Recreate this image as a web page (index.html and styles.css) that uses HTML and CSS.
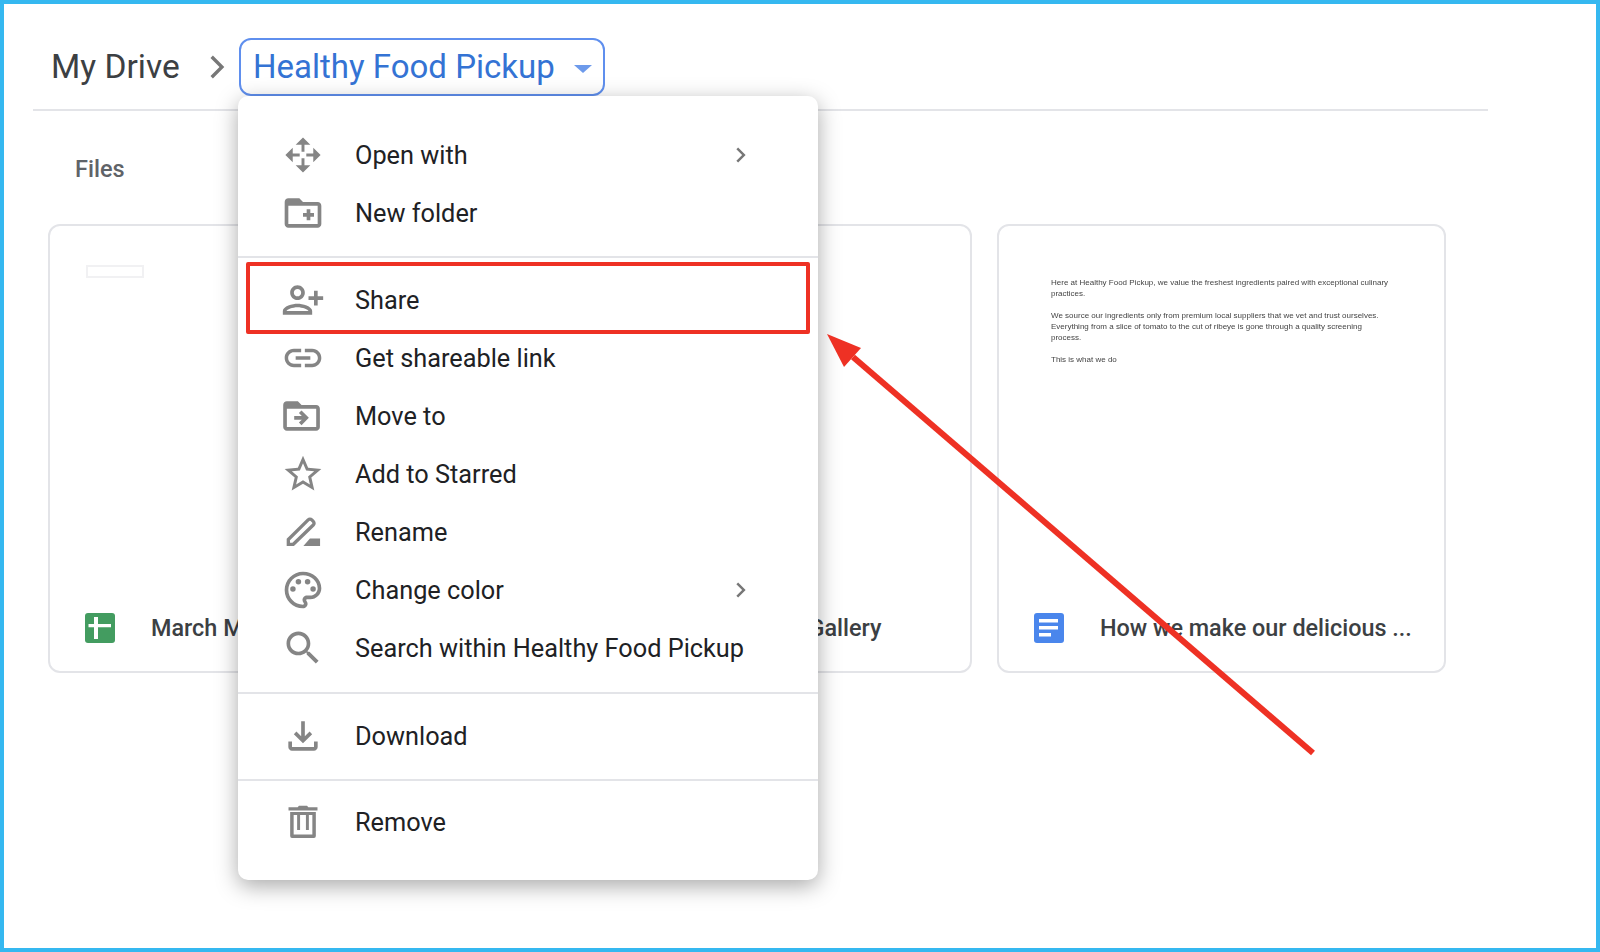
FILE: index.html
```html
<!DOCTYPE html>
<html lang="en">
  <head>
    <title>My Drive - Healthy Food Pickup</title>
    <link rel="stylesheet" href="styles.css">
  </head>
  <body>
    <div class="frame">
      <header class="breadcrumb">
        <span class="crumb">My Drive</span>
        <svg class="crumb-sep" viewBox="0 0 24 24"><path d="M8.6 4.4L7 6l6 6-6 6 1.6 1.6L16.2 12z"/></svg>
        <div class="crumb-wrap">
          <button class="crumb-current">
            <span>Healthy Food Pickup</span>
            <i class="caret"></i>
          </button>

          <div class="menu">
            <div class="menu-group menu-group-top">
              <div class="menu-item">
                <svg class="icon" viewBox="0 0 24 24"><path d="M12 2.400L8 6.400h3.200v3.800h1.600V6.400H16zM12 21.600l4-4h-3.200v-3.800h-1.600v3.800H8zM2.400 12l4 4v-3.200h3.800v-1.600H6.400V8zM21.600 12l-4-4v3.200h-3.800v1.600h3.800V16z"/></svg>
                <span class="menu-label">Open with</span>
                <svg class="sub-arrow" viewBox="0 0 24 24"><path d="M9.7 6L8.3 7.4l4.6 4.6-4.6 4.6L9.7 18l6-6z"/></svg>
              </div>
              <div class="menu-item">
                <svg class="icon" viewBox="0 0 24 24"><path d="M20 6h-8l-2-2H4c-1.11 0-1.99.89-1.99 2L2 18c0 1.11.89 2 2 2h16c1.11 0 2-.89 2-2V8c0-1.11-.89-2-2-2zm0 12H4V8h16v10zm-8-4h2v2h2v-2h2v-2h-2v-2h-2v2h-2z"/></svg>
                <span class="menu-label">New folder</span>
              </div>
            </div>

            <div class="menu-group menu-group-main">
              <div class="menu-item menu-item-marked">
                <svg class="icon" viewBox="0 0 24 24"><path transform="translate(24 0) scale(-1 1)" d="M15 12c2.21 0 4-1.79 4-4s-1.79-4-4-4-4 1.79-4 4 1.79 4 4 4zm0-6c1.1 0 2 .9 2 2s-.9 2-2 2-2-.9-2-2 .9-2 2-2zm0 8c-2.67 0-8 1.34-8 4v2h16v-2c0-2.66-5.33-4-8-4zm-6 4c.22-.72 3.31-2 6-2 2.7 0 5.8 1.29 6 2H9zm-3-3v-3h3v-2H6V7H4v3H1v2h3v3h2z"/></svg>
                <span class="menu-label">Share</span>
              </div>
              <div class="menu-item">
                <svg class="icon" viewBox="0 0 24 24"><path d="M3.9 12c0-1.71 1.39-3.1 3.1-3.1h4V7H7c-2.76 0-5 2.24-5 5s2.24 5 5 5h4v-1.9H7c-1.71 0-3.1-1.39-3.1-3.1zM8 13h8v-2H8v2zm9-6h-4v1.9h4c1.71 0 3.1 1.39 3.1 3.1s-1.39 3.1-3.1 3.1h-4V17h4c2.76 0 5-2.24 5-5s-2.24-5-5-5z"/></svg>
                <span class="menu-label">Get shareable link</span>
              </div>
              <div class="menu-item">
                <svg class="icon" viewBox="0 0 24 24"><path transform="translate(-.8 0)" d="M20 6h-8l-2-2H4c-1.1 0-2 .9-2 2v12c0 1.1.9 2 2 2h16c1.1 0 2-.9 2-2V8c0-1.1-.9-2-2-2zm0 12H4V8h16v10zm-8.010-9l-1.410 1.410L12.160 12H8v2h4.160l-1.590 1.590L11.990 17 16 13.010 11.990 9z"/></svg>
                <span class="menu-label">Move to</span>
              </div>
              <div class="menu-item">
                <svg class="icon" viewBox="0 0 24 24"><path d="M22 9.24l-7.19-.62L12 2 9.19 8.63 2 9.24l5.46 4.73L5.82 21 12 17.27 18.18 21l-1.63-7.03L22 9.24zM12 15.4l-3.76 2.27 1-4.28-3.32-2.88 4.38-.38L12 6.1l1.71 4.04 4.38.38-3.32 2.88 1 4.28L12 15.4z"/></svg>
                <span class="menu-label">Add to Starred</span>
              </div>
              <div class="menu-item">
                <svg class="icon" viewBox="0 0 24 24"><path class="icon-line" d="M4 18.700v-2.600L14.800 5.400c.6-.6 1.400-.6 2 0l.8.8c.6.6.6 1.400 0 2L6.700 18.700z"/><path d="M12.200 19.600l3.600-4h5.500v4z"/></svg>
                <span class="menu-label">Rename</span>
              </div>
              <div class="menu-item">
                <svg class="icon" viewBox="0 0 24 24"><path d="M12 22C6.49 22 2 17.51 2 12S6.49 2 12 2s10 4.04 10 9c0 3.31-2.69 6-6 6h-1.77c-.28 0-.5.22-.5.5 0 .12.05.23.13.33.41.47.64 1.06.64 1.67 0 1.38-1.12 2.5-2.5 2.5zm0-18c-4.41 0-8 3.59-8 8s3.59 8 8 8c.28 0 .5-.22.5-.5 0-.16-.08-.28-.14-.35-.41-.46-.63-1.05-.63-1.65 0-1.38 1.12-2.5 2.5-2.5H16c2.21 0 4-1.79 4-4 0-3.86-3.59-7-8-7z"/><circle cx="6.5" cy="11.5" r="1.5"/><circle cx="9.5" cy="7.5" r="1.5"/><circle cx="14.5" cy="7.5" r="1.5"/><circle cx="17.5" cy="11.5" r="1.5"/></svg>
                <span class="menu-label">Change color</span>
                <svg class="sub-arrow" viewBox="0 0 24 24"><path d="M9.7 6L8.3 7.4l4.6 4.6-4.6 4.6L9.7 18l6-6z"/></svg>
              </div>
              <div class="menu-item">
                <svg class="icon" viewBox="0 0 24 24"><path d="M15.5 14h-.79l-.28-.27C15.41 12.59 16 11.11 16 9.5 16 5.91 13.09 3 9.5 3S3 5.91 3 9.5 5.91 16 9.5 16c1.61 0 3.09-.59 4.23-1.57l.27.28v.79l5 4.99L20.49 19l-4.99-5zm-6 0C7.01 14 5 11.99 5 9.5S7.01 5 9.5 5 14 7.01 14 9.5 11.99 14 9.5 14z"/></svg>
                <span class="menu-label">Search within Healthy Food Pickup</span>
              </div>
            </div>

            <div class="menu-group menu-group-single">
              <div class="menu-item">
                <svg class="icon" viewBox="0 0 24 24"><path d="M18 15v3H6v-3H4v3c0 1.1.9 2 2 2h12c1.1 0 2-.9 2-2v-3h-2zm-1-4l-1.41-1.41L13 12.17V4h-2v8.17L8.41 9.59 7 11l5 5 5-5z"/></svg>
                <span class="menu-label">Download</span>
              </div>
            </div>

            <div class="menu-group">
              <div class="menu-item">
                <svg class="icon" viewBox="0 0 24 24"><path fill-rule="evenodd" d="M4.100 3.900h5l.7-.7h4.400l.7.7h5v1.800H4.100zM5 6.500h14v13.200a1 1 0 0 1-1 1H6a1 1 0 0 1-1-1zM6.900 8.200v10.600h10.200V8.200z"/><path d="M8.800 8.200h1.600v8.200H8.800zM13.600 8.200h1.600v8.200h-1.600z"/></svg>
                <span class="menu-label">Remove</span>
              </div>
            </div>
          </div>
        </div>
      </header>

      <main class="content">
        <h2 class="section-title">Files</h2>
        <div class="file-grid">
          <div class="file-card">
            <div class="thumb"><div class="sheet-cell"></div></div>
            <div class="file-name">
              <svg class="file-icon" viewBox="0 0 30 30"><rect width="30" height="30" rx="3" fill="#439c60"/><path d="M3.500 11H9V4h4v7h13v3.300H13V26H9V14.300H3.500z" fill="#fff"/></svg>
              <span>March M</span>
            </div>
          </div>
          <div class="file-card">
            <div class="thumb"></div>
            <div class="file-name file-name-end">
              <span>Gallery</span>
            </div>
          </div>
          <div class="file-card">
            <div class="thumb doc-thumb">
              <p>Here at Healthy Food Pickup, we value the freshest ingredients paired with exceptional culinary practices.</p>
              <p>We source our ingredients only from premium local suppliers that we vet and trust ourselves. Everything from a slice of tomato to the cut of ribeye is gone through a quality screening process.</p>
              <p>This is what we do</p>
            </div>
            <div class="file-name">
              <svg class="file-icon" viewBox="0 0 30 30"><rect width="30" height="30" rx="3" fill="#4a86ec"/><path d="M5 6h19v3.500H5zM5 13h19v3.500H5zM5 20h12v3.500H5z" fill="#fff"/></svg>
              <span>How we make our delicious ...</span>
            </div>
          </div>
        </div>
      </main>

      <!-- annotation pointing at the Share row -->
      <svg class="arrow" viewBox="0 0 1600 952">
        <path d="M1313 753L853 357" stroke="#ee3124" stroke-width="6" fill="none"/>
        <path d="M827 334L861 348L844 367z" fill="#ee3124"/>
      </svg>
    </div>
  </body>
</html>
```

FILE: styles.css
```css
* {
  box-sizing: border-box;
}
body {
  margin: 0;
  font-family: Roboto, "Liberation Sans", sans-serif;
  background-color: #fff;
}
.frame {
  width: 1600px;
  height: 952px;
  border: 4px solid #35b8f0;
  position: relative;
  overflow: hidden;
}

/* breadcrumb */
.breadcrumb {
  display: flex;
  align-items: center;
  width: 1455px;
  height: 107px;
  margin-left: 29px;
  padding: 34px 0 13px 18px;
  border-bottom: 2px solid #e3e4e8;
}
.crumb {
  font-size: 33.500px;
  color: #3c4043;
  width: 149px;
  padding-bottom: 2px;
}
.crumb-sep {
  width: 36px;
  height: 36px;
  fill: #777;
  margin-right: 3px;
}
.crumb-wrap {
  position: relative;
}
.crumb-current {
  display: flex;
  align-items: center;
  width: 366px;
  height: 58px;
  padding: 0 0 2px 12px;
  background-color: #fff;
  border: 2px solid #5f8fee;
  border-radius: 12px;
  font-family: inherit;
  font-size: 33px;
  color: #3473d4;
}
.caret {
  margin-left: 19px;
  margin-top: 5px;
  border-left: 9px solid transparent;
  border-right: 9px solid transparent;
  border-top: 8px solid #6d9aeb;
}

/* context menu */
.menu {
  position: absolute;
  top: 100%;
  left: -1px;
  z-index: 2;
  width: 580px;
  height: 784px;
  background-color: #fff;
  border-radius: 10px;
  box-shadow: 0 6px 22px rgba(0, 0, 0, 0.34);
  padding-top: 30px;
}
.menu-group {
  border-bottom: 2px solid #e3e4e8;
  padding: 0 0 14px;
  margin-bottom: 13px;
}
.menu-group-main {
  padding-bottom: 15px;
}
.menu-group-single {
  margin-bottom: 12px;
}
.menu-group:last-child {
  border-bottom: none;
}
.menu-item {
  display: flex;
  align-items: center;
  height: 58px;
  padding-left: 43px;
  position: relative;
}
.menu-item-marked::after {
  content: "";
  position: absolute;
  top: -9px;
  bottom: -5px;
  left: 8px;
  right: 8px;
  border: 4px solid #ee3124;
  border-radius: 2px;
}
.icon {
  width: 44px;
  height: 44px;
  fill: #858585;
  flex-shrink: 0;
}
.icon-line {
  fill: none;
  stroke: #858585;
  stroke-width: 1.800;
}
.menu-label {
  margin-left: 30px;
  font-size: 25.300px;
  color: #202124;
  white-space: nowrap;
}
.sub-arrow {
  position: absolute;
  left: 488px;
  width: 30px;
  height: 30px;
  fill: #777;
}

/* files */
.content {
  padding: 0 0 0 44px;
}
.section-title {
  margin: 43px 0 0 27px;
  font-size: 23.500px;
  line-height: 30px;
  font-weight: 500;
  color: #5f6368;
}
.file-grid {
  display: grid;
  grid-template-columns: repeat(3, 449px);
  gap: 25.500px;
  margin-top: 40px;
}
.file-card {
  height: 449px;
  border: 2px solid #e3e4e8;
  border-radius: 12px;
  display: flex;
  flex-direction: column;
  overflow: hidden;
}
.thumb {
  flex: 1;
}
.sheet-cell {
  width: 58px;
  height: 13px;
  margin: 39px 0 0 36px;
  border: 2px solid #f1f1f3;
}
.doc-thumb {
  padding: 51px 55px 0 52px;
  font-family: "Liberation Sans", sans-serif;
  font-size: 8px;
  line-height: 11px;
  color: #444;
  filter: blur(0.4px);
}
.doc-thumb p {
  margin: 0 0 11px;
}
.file-name {
  display: flex;
  align-items: center;
  height: 87px;
  padding-left: 35px;
  font-size: 23.400px;
  font-weight: 500;
  color: #3c4043;
  white-space: nowrap;
}
.file-name-end {
  justify-content: flex-end;
  padding: 0 88px 0 0;
}
.file-icon {
  width: 30px;
  height: 30px;
  margin-right: 36px;
  flex-shrink: 0;
}

/* arrow sits above everything */
.arrow {
  position: absolute;
  top: -4px;
  left: -4px;
  width: 1600px;
  height: 952px;
  z-index: 3;
  pointer-events: none;
}
```
